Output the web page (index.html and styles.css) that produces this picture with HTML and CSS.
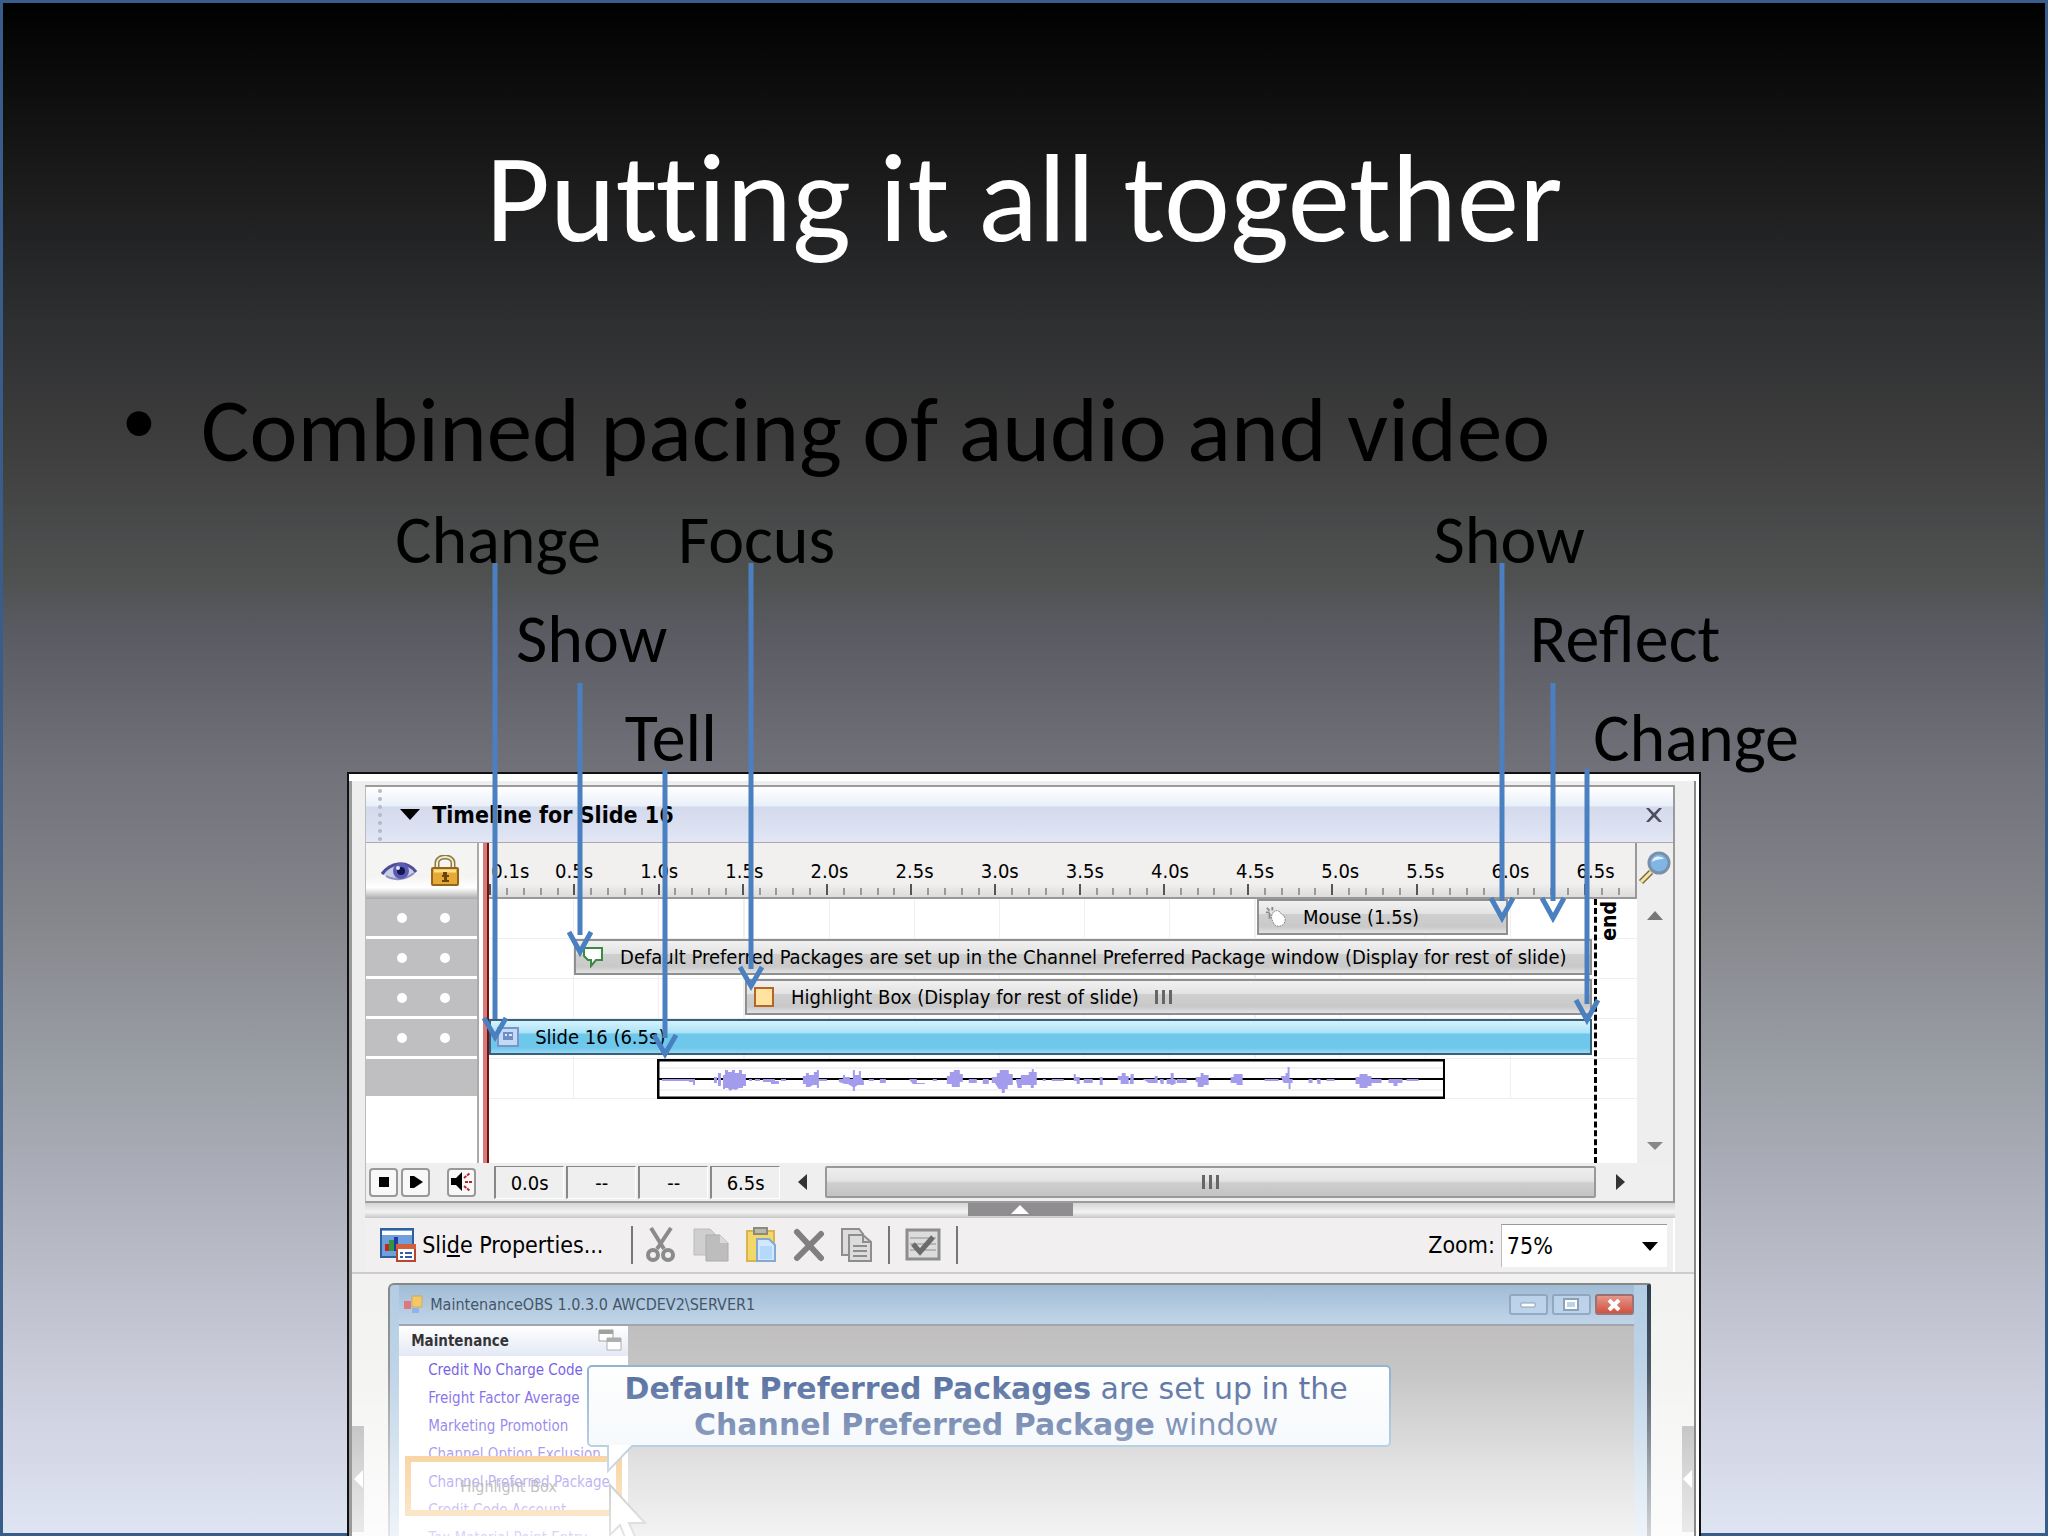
FILE: index.html
```html
<!DOCTYPE html>
<html lang="en">
	<head>
		<meta charset="UTF-8">
		<title>Putting it all together</title>
		<link rel="stylesheet" href="styles.css">
	</head>
	<body>
		<div class="slide">
			<h1>Putting it all together</h1>
			<ul class="points">
				<li>Combined pacing of audio and video</li>
			</ul>
			<div class="steps">
				<span style="left: 19.3%">Change</span>
				<span style="left: 33.1%">Focus</span>
				<span style="left: 70%">Show</span>
			</div>
			<div class="steps">
				<span style="left: 25.2%">Show</span>
				<span style="left: 74.7%">Reflect</span>
			</div>
			<div class="steps">
				<span style="left: 30.5%">Tell</span>
				<span style="left: 77.8%">Change</span>
			</div>

			<div class="app">
				<!-- timeline -->
				<div class="timeline">
					<div class="titlebar">
						<i class="grip"></i>
						<svg width="20" height="12" viewBox="0 0 20 12"><path d="M0 0h20L10 11z"/></svg>
						<b>Timeline for Slide 16</b>
						<button class="close" aria-label="Close">
							<svg width="18" height="16" viewBox="0 0 18 16"><path d="M1 1h3l5 5 5-5h3l-6 7 6 7h-3l-5-5-5 5H1l6-7z" fill="#4d4d5c"/></svg>
						</button>
					</div>
					<div class="board">
						<div class="flags">
							<div class="flag-head">
								<svg width="36" height="22" viewBox="0 0 36 22">
									<path d="M1 14C9 2 25-2 35 12 27 21 12 21 1 14z" fill="#c9cde8"/>
									<path d="M1 14C9 3 25-1 35 12" fill="none" stroke="#4d4f91" stroke-width="3"/>
									<path d="M5 16c8 5 20 4 28-3" fill="none" stroke="#8e8fc0" stroke-width="2"/>
									<circle cx="20" cy="11" r="8" fill="#5a5cb4"/><circle cx="20" cy="11" r="4" fill="#15164f"/><circle cx="17" cy="8" r="2" fill="#dfe2ff"/>
								</svg>
								<svg width="28" height="32" viewBox="0 0 28 32">
									<path d="M6 14V8c0-8 16-8 16 0v6" fill="none" stroke="#8c7a48" stroke-width="5"/>
									<path d="M6 14V8c0-8 16-8 16 0v6" fill="none" stroke="#f3ecc8" stroke-width="2"/>
									<rect x="1" y="13" width="26" height="17" rx="1" fill="#e5aa35" stroke="#94661c" stroke-width="2"/>
									<path d="M3 16h22" stroke="#ffe18a" stroke-width="3"/>
									<path d="M12 17h4v3h2v2h-2v3h2v2h-7v-2h2v-3h-2v-2h1z" fill="#6b4511"/>
								</svg>
							</div>
							<div class="flag"><i></i><i></i></div>
							<div class="flag"><i></i><i></i></div>
							<div class="flag"><i></i><i></i></div>
							<div class="flag"><i></i><i></i></div>
							<div class="flag"></div>
						</div>
						<div class="tracks">
							<div class="ruler">
								<div class="times" id="times"></div>
								<div class="ticks" id="ticks"></div>
							</div>
							<div class="track">
								<div class="bar" style="margin-left: 66.9%; width: 21.9%">
									<svg width="24" height="24" viewBox="0 0 24 24"><path d="M9 7c3-4 8-1 9 2 5 2 5 8 2 11-4 4-10 2-11-2-2-4-3-7 0-11z" fill="#fff" stroke="#777" stroke-dasharray="2 1"/><path d="M2 2l3 3M8 1v4M1 7h4M5 8v6" stroke="#888" stroke-width="2"/></svg>
									<span>Mouse (1.5s)</span>
								</div>
							</div>
							<div class="track">
								<div class="bar" style="margin-left: 7.4%; width: 88.7%">
									<svg width="20" height="22" viewBox="0 0 20 22"><path d="M1 2h18v12h-6l-5 6v-6H5l-4-4z" fill="#fff" stroke="#3a8a42" stroke-width="2"/></svg>
									<span>Default Preferred Packages are set up in the Channel Preferred Package window (Display for rest of slide)</span>
								</div>
							</div>
							<div class="track">
								<div class="bar" style="margin-left: 22.3%; width: 73.8%">
									<svg width="20" height="20" viewBox="0 0 20 20"><path d="M1 1h18v18H1z" fill="#ffe3a0" stroke="#b5652a" stroke-width="2"/></svg>
									<span>Highlight Box (Display for rest of slide)</span>
									<i class="thumb-grip"></i>
								</div>
							</div>
							<div class="track">
								<div class="bar selected" style="margin-left: 0; width: 96.1%">
									<svg width="22" height="20" viewBox="0 0 22 20"><path d="M1 1h20v18H1z" fill="#c3daf7" stroke="#7b94c9" stroke-width="2"/><path d="M6 5h10v8H6z" fill="#6f8fc4"/><path d="M8 7h2v2H8zM12 7h3v2h-3z" fill="#d8e8ff"/></svg>
									<span>Slide 16 (6.5s)</span>
								</div>
							</div>
							<div class="track">
								<svg class="audio" style="margin-left: 14.6%; width: 68.7%" viewBox="0 0 789 40" preserveAspectRatio="none">
									<rect x="1" y="1" width="787" height="38" fill="#fff" stroke="#000" stroke-width="3"/>
									<path d="M3 9h783M3 31h783" stroke="#e6e6e6"/>
									<path d="M2 20h785" stroke="#000" stroke-width="2"/>
									<path fill="#a39bec" d="M5 20h30v2H5zM32 20h6v6h-2v-3h-4zM57 18h3v6h-3zM61 14h3v13h-3zM66 16h3v5l-1 9h-2zM68 11h3v2h4v-2h3v3h4v-3h3v4h4v12h-3v2h-4l-3 2-3-1-3 2-2-3h-3zM92 20h3v2h-3zM98 20h5v2h-5zM106 20h12v2h4v3h-8v-2h-8zM124 20h5v2h-5zM146 17h3v-3h3v2h5v-3h3v-2h2v18h-2v-3h-4l-3 2h-4v-3h-3zM162 20h8v2h-8zM182 20h4v-4h2v2h5v2h3v-9h2v5h4v-4h2v6l3 4v4h-6l-3 2v4h-2v-4l-5-3h-3l-6-2zM212 20h5v2h-5zM223 20h6v4h-6zM252 20h8v4h8v1h-12zM276 20h4v2h-4zM290 17h3v-4h4v-2h6v4h3v8h-3v5h-8v-3h-5zM312 20h8v4h-8zM326 20h6v5h-6zM335 18h5v-4h3v-3h9v4h4v11h-5v4h-3v4h-3v-4h-3l-4-6h-3zM359 20h5v-4h5v10h-4v3h-4zM369 16h3v-3h3v-3h2v3h3v13h-3v3h-3v-3h-5zM386 20h3v2h-3zM395 20h12v2h-12zM417 15h2v3h4v7h-3v-3h-3zM427 20h9v4h-9zM443 18h3v8h-3zM461 17h4v-3h4v3h3v8h-8v-4h-3zM474 15h3v10h-4zM486 20h12v-3h3v7h-9zM503 20h4v5h-3zM514 14h3v12h-3zM510 20h9v5h-9zM520 20h10v4h-10zM539 18h5v-4h3v2h5v10h-5v2h-6v-5h-2zM574 18h3v-3h9v11h-6v-2h-6zM608 20h14v2h-14zM624 17h5v-3h2V8h2v12h3v4h-2v6h-2v-6h-5zM652 20h4v4h-4zM660 20h4v5h-3zM670 20h8v2h-8zM699 18h4v-3h8v2h4v3h10v4h-10v3h-4v2h-8v-4h-4zM732 20h14v4h-5v3h-4v-3h-5zM750 20h12v2h-12z"/>
								</svg>
							</div>
							<div class="end"><b>end</b></div>
						</div>
						<div class="scroll-v">
							<svg width="34" height="34" viewBox="0 0 34 34">
								<path d="M3 31l10-10" stroke="#7d6a35" stroke-width="6"/><path d="M3 31l10-10" stroke="#f3e4ae" stroke-width="3"/>
								<circle cx="21" cy="12" r="10" fill="#7fb6e4" stroke="#7c8fa8" stroke-width="3"/>
								<path d="M14 11c1-6 8-7 12-3-3 0-7 0-12 3z" fill="#dff1ff"/>
							</svg>
							<svg class="up" width="16" height="10" viewBox="0 0 16 10"><path d="M0 9l8-9 8 9z" fill="#777"/></svg>
							<svg class="down" width="16" height="10" viewBox="0 0 16 10"><path d="M0 1h16L8 9z" fill="#888"/></svg>
						</div>
					</div>
					<div class="controls">
						<button aria-label="Stop"><svg width="10" height="10" viewBox="0 0 10 10"><path d="M0 0h10v10H0z"/></svg></button>
						<button aria-label="Play"><svg width="14" height="14" viewBox="0 0 14 14"><path d="M1 1h4l9 6-9 6H1z"/></svg></button>
						<button class="sound" aria-label="Audio"><svg width="22" height="20" viewBox="0 0 22 20"><path d="M0 6h5l6-6v19l-6-6H0z"/><path d="M13 6l6-5M14 10h7M13 14l6 5" stroke="#b23" stroke-width="2" stroke-dasharray="3 1"/></svg></button>
						<span class="cell">0.0s</span>
						<span class="cell">--</span>
						<span class="cell">--</span>
						<span class="cell">6.5s</span>
						<svg class="prev" width="9" height="16" viewBox="0 0 9 16"><path d="M9 0v16L0 8z" fill="#333"/></svg>
						<div class="scroll-h"><i class="thumb-grip"></i></div>
						<svg class="next" width="9" height="16" viewBox="0 0 9 16"><path d="M0 0v16l9-8z" fill="#333"/></svg>
					</div>
				</div>
				<div class="splitter">
					<i><svg width="18" height="9" viewBox="0 0 18 9"><path d="M0 9l9-9 9 9z" fill="#fff"/></svg></i>
				</div>

				<!-- toolbar -->
				<div class="toolbar">
					<button class="props">
						<svg width="36" height="36" viewBox="0 0 36 36">
							<path d="M1 2h32v28H1z" fill="#6f9fdc" stroke="#2f5f9e" stroke-width="2"/><path d="M2 4h30v4H2z" fill="#fff"/>
							<path d="M5 17h4v7H5z" fill="#c22"/><path d="M9 13h5v11H9z" fill="#2a9a3c"/><path d="M14 10h4v14h-4z" fill="#2238a8"/>
							<path d="M17 18h18v16H17z" fill="#fff" stroke="#b5482c" stroke-width="2"/><path d="M16 17h20v5H16z" fill="#d2603c"/>
							<path d="M20 26h3M25 26h7M20 30h3M25 30h7" stroke="#3558a8" stroke-width="2"/>
						</svg>
						<span>Sli<u>d</u>e Properties...</span>
					</button>
					<i class="sep"></i>
					<button aria-label="Cut">
						<svg width="32" height="36" viewBox="0 0 32 36" fill="none" stroke="#8b8b8b"><path d="M6 1l13 21M26 1L12 22" stroke-width="4"/><circle cx="8" cy="28" r="5" stroke-width="4"/><circle cx="23" cy="28" r="5" stroke-width="4"/></svg>
					</button>
					<button aria-label="Copy">
						<svg width="36" height="36" viewBox="0 0 36 36"><path d="M1 2h16l6 6v20H1z" fill="#cfcfcf" stroke="#bcbcbc"/><path d="M13 8h14l8 8v18H13z" fill="#bdbdbd" stroke="#adadad"/><path d="M27 8v8h8z" fill="#dadada"/></svg>
					</button>
					<button aria-label="Paste">
						<svg width="32" height="36" viewBox="0 0 32 36"><path d="M2 4h27v30H2z" fill="#f3d768" stroke="#d9b550" stroke-width="2"/><path d="M9 1h13v6H9z" fill="#b9b9ad" stroke="#8a8a80" stroke-width="2"/><path d="M12 12h12l6 6v16H12z" fill="#d4e8fb" stroke="#83a9d6" stroke-width="2"/><path d="M15 19h12v13H15z" fill="#b5d9fa"/></svg>
					</button>
					<button aria-label="Delete">
						<svg width="32" height="34" viewBox="0 0 32 34"><path d="M4 4l24 26M28 6L4 30" stroke="#808080" stroke-width="6" stroke-linecap="round"/></svg>
					</button>
					<button aria-label="Duplicate">
						<svg width="32" height="36" viewBox="0 0 32 36" fill="#dcdcdc" stroke="#8e8e8e" stroke-width="2"><path d="M1 2h17l4 5v21H1z"/><path d="M8 8h14l8 7v19H8z"/><path d="M22 8v7h8M12 19h14M12 24h14M12 29h14" fill="none"/></svg>
					</button>
					<i class="sep"></i>
					<button class="check" aria-label="Accept">
						<svg width="36" height="34" viewBox="0 0 36 34"><path d="M2 2h32v29H2z" fill="#dcdcdc" stroke="#8e8e8e" stroke-width="3"/><path d="M5 10h26M5 16h26M5 22h26" stroke="#b5b5b5" stroke-width="2"/><path d="M8 16l7 8L28 9" fill="none" stroke="#6c6c6c" stroke-width="5"/></svg>
					</button>
					<i class="sep"></i>
					<label for="zoom">Zoom:</label>
					<span class="select">
						<select id="zoom"><option>75%</option></select>
						<svg width="16" height="9" viewBox="0 0 16 9"><path d="M0 0h16L8 9z"/></svg>
					</span>
				</div>

				<!-- slide preview -->
				<div class="preview">
					<i class="side-tab"><svg width="9" height="18" viewBox="0 0 9 18"><path d="M9 0v18L0 9z" fill="#fff"/></svg></i>
					<div class="window">
						<div class="win-title">
							<svg width="20" height="20" viewBox="0 0 20 20"><path d="M1 6h7v8H1z" fill="#d4606c"/><path d="M9 1h10v11H9z" fill="#f0c04c" stroke="#c99a49"/><path d="M9 13h7v5H9z" fill="#7fa3e4"/></svg>
							<span>MaintenanceOBS 1.0.3.0 AWCDEV2\SERVER1</span>
							<button aria-label="Minimize"><svg width="16" height="8" viewBox="0 0 16 8"><path d="M1 2h14v4H1z" fill="#fff" stroke="#7890ad"/></svg></button>
							<button aria-label="Maximize"><svg width="16" height="14" viewBox="0 0 16 14"><path d="M2 2h12v9H2z" fill="none" stroke="#7890ad" stroke-width="4"/><path d="M3 3h10v7H3z" fill="none" stroke="#fff" stroke-width="2"/></svg></button>
							<button class="win-close" aria-label="Close window"><svg width="16" height="12" viewBox="0 0 16 12"><path d="M3 1l10 10M13 1L3 11" stroke="#fff" stroke-width="4"/></svg></button>
						</div>
						<div class="win-body">
							<div class="menu">
								<div class="menu-head">
									<b>Maintenance</b>
									<svg width="24" height="24" viewBox="0 0 24 24"><path d="M1 1h14v11H1z" fill="#fff" stroke="#8a8a8a"/><path d="M1 3h14" stroke="#8a8a8a" stroke-width="4"/><path d="M9 9h14v12H9z" fill="#fff" stroke="#9a9a9a"/><path d="M9 11h14" stroke="#9a9a9a" stroke-width="4"/></svg>
								</div>
								<a href="#">Credit No Charge Code</a>
								<a href="#">Freight Factor Average</a>
								<a href="#">Marketing Promotion</a>
								<a href="#">Channel Option Exclusion</a>
								<a href="#">Channel Preferred Package</a>
								<a href="#">Credit Code Account</a>
								<a href="#">Tax Material Point Entry</a>
							</div>
							<div class="highlight">Highlight Box</div>
							<div class="callout">
								<b>Default Preferred Packages</b> are set up in the<br><b>Channel Preferred Package</b> window
								<svg width="28" height="30" viewBox="0 0 28 30"><path d="M1 0v26L26 0" fill="#fff" stroke="#7ba3c4" stroke-width="2"/></svg>
							</div>
							<svg class="pointer" width="40" height="64" viewBox="0 0 40 64"><path d="M2 2v50l10-10 8 20 9-4-8-18h16z" fill="#fff" stroke="#777" stroke-width="2"/></svg>
						</div>
					</div>
					<i class="side-tab"><svg width="9" height="18" viewBox="0 0 9 18"><path d="M9 0v18L0 9z" fill="#fff"/></svg></i>
				</div>
			</div>

			<svg class="arrows" viewBox="0 0 2048 1536">
				<path d="M495 563v456M484 1018l11 19 11-19M580 683v252M569 932l11 20 11-20M665 770v268M654 1035l11 19 11-19M751 563v406M740 967l11 19 11-19M1502 563v338M1491 898l11 20 11-20M1553 683v218M1542 898l11 20 11-20M1587 769v235M1576 1000l11 20 11-20"/>
			</svg>
		</div>
		<script>
			var times = document.getElementById("times");
			var ticks = document.getElementById("ticks");
			for (var i = 0; i <= 13; i++) {
				var time = document.createElement("span");
				time.textContent = i == 0 ? "0.1s" : (i / 2).toFixed(1) + "s";
				times.appendChild(time);
			}
			for (var k = 0; k < 68; k++) {
				var tick = document.createElement("i");
				if (k % 5 == 0) {
					tick.className = "major";
				}
				ticks.appendChild(tick);
			}
		</script>
	</body>
</html>
```
FILE: styles.css
```css
* {
	box-sizing: border-box;
}

body {
	margin: 0;
	font-family: "DejaVu Sans Condensed", Tahoma, "Noto Sans", sans-serif;
	font-size: 20px;
	color: #000;
}

svg {
	display: block;
	flex: none;
}

button {
	margin: 0;
	padding: 0;
	border: 0;
	background: none;
	font: inherit;
	color: inherit;
}

.slide {
	position: relative;
	display: flex;
	flex-direction: column;
	height: 100vh;
	overflow: hidden;
	background: linear-gradient(#000, #171718 10%, #2c2d2e 20%, #404041 30%, #505252 38%, #5a5b62 41%, #717279 50%, #86878d 60%, #9b9fa6 70%, #b4b6c2 80%, #cccedc 90%, #dfe5f3);
	box-shadow: inset 0 0 0 3px #385d8a;
}

h1,
.points,
.steps {
	flex: none;
	font-family: Carlito, Calibri, Lato, sans-serif;
	font-weight: normal;
}

h1 {
	margin: 127px 0 0;
	font-size: 125px;
	line-height: 144px;
	font-variant-ligatures: none;
	text-align: center;
	color: #fff;
}

.points {
	margin: 103px 0 4px;
	padding: 0 0 0 201px;
	list-style: none;
	font-size: 91px;
	line-height: 112px;
}

.points li::before {
	content: "•";
	float: left;
	margin-left: -78px;
	font-family: "Liberation Sans", Arial, sans-serif;
	line-height: 98px;
}

.steps {
	position: relative;
	height: 99px;
	font-size: 68px;
	line-height: 99px;
}

.steps span {
	position: absolute;
}

/* screenshot panel */
.app {
	flex: 1;
	z-index: 1;
	display: flex;
	flex-direction: column;
	width: 66.1%;
	margin: -15px auto 0;
	padding: 11px 24px 0 16px;
	border: 2px solid #111;
	border-bottom: 0;
	background: #efeeef;
	box-shadow: inset 0 7px #fff, inset -3px 0 #fff, inset -5px 0 #888, inset 3px 0 #999;
}

.timeline {
	border: 2px solid #9b9b9b;
	border-left: 1px solid #bbb;
	background: #f0efef;
}

.titlebar {
	display: flex;
	align-items: center;
	height: 56px;
	padding: 0 10px 0 12px;
	border-bottom: 1px solid #aaa;
	background: linear-gradient(#fff, #e9eff9 35%, #d3daec 36%, #e2e6f5);
	font-size: 23px;
}

.grip {
	height: 52px;
	margin-right: 18px;
	border-left: 4px dotted #b4b9c6;
}

.titlebar b {
	margin-left: 12px;
}

.close {
	margin-left: auto;
}

.board {
	display: grid;
	grid-template-columns: 113px 1fr 36px;
	height: 320px;
	background: #fff;
}

.flags {
	border-right: 2px solid #aaa;
}

.flag-head {
	display: flex;
	justify-content: center;
	align-items: center;
	gap: 14px;
	height: 56px;
	padding-right: 4px;
	background: linear-gradient(#f4f4f3 60%, #fff 80%, #aaa);
}

.flag {
	display: flex;
	justify-content: center;
	align-items: center;
	gap: 33px;
	height: 40px;
	padding-left: 4px;
	border-bottom: 3px solid #fff;
	background: #bfbfc1;
}

.flag i {
	width: 10px;
	height: 10px;
	border-radius: 50%;
	background: #fff;
}

.tracks {
	position: relative;
	margin-left: 4px;
	border-left: 4px solid #d97a78;
	box-shadow: inset 2px 0 #6a1414;
}

.ruler {
	height: 56px;
	margin-left: 2px;
	padding-top: 14px;
	border-right: 2px solid #999;
	border-bottom: 2px solid #999;
	background: linear-gradient(#f1f0ef 75%, #dcdcdc);
}

.times {
	display: grid;
	grid-template-columns: 3.7% repeat(13, 7.43%);
	height: 26px;
	line-height: 28px;
	text-align: center;
}

.ticks {
	display: flex;
	align-items: flex-end;
	height: 12px;
}

.ticks i {
	flex: 1;
	height: 7px;
	border-left: 2px solid #999;
}

.ticks .major {
	height: 11px;
	border-color: #555;
}

.track {
	height: 40px;
	margin-left: 2px;
	border-bottom: 1px solid #eee;
	background: repeating-linear-gradient(to right, transparent 0 7.32%, #f0f0f0 7.32% 7.42%);
}

.bar {
	display: flex;
	align-items: center;
	height: 36px;
	padding-left: 6px;
	border: 2px solid #8f8f8f;
	background: linear-gradient(#f1f1f1, #e3e3e3 40%, #cfcfcf 42%, #c9c9c9 80%, #e2e2e2);
	white-space: nowrap;
}

.bar svg {
	width: 22px;
}

.bar span {
	margin-left: 16px;
}

.bar.selected {
	border-color: #37607f;
	background: linear-gradient(#d8f2fc, #a8e2f7 38%, #6ec8ec 40%, #6ec8ec 84%, #9cd6ef);
}

.thumb-grip {
	width: 18px;
	height: 14px;
	margin-left: 16px;
	background: repeating-linear-gradient(to right, #666 0 3px, transparent 3px 7px);
}

.audio {
	height: 40px;
}

.end {
	position: absolute;
	top: 56px;
	bottom: 0;
	left: 96.3%;
	padding-top: 2px;
	border-left: 3px dashed #000;
	font-size: 21px;
	line-height: 24px;
}

.end b {
	display: block;
	writing-mode: vertical-rl;
	transform: rotate(180deg);
}

.scroll-v {
	display: flex;
	flex-direction: column;
	align-items: center;
	padding: 8px 0 12px;
	background: #efeeef;
}

.up {
	margin-top: 26px;
}

.down {
	margin-top: auto;
}

.controls {
	display: flex;
	align-items: center;
	height: 38px;
	padding-left: 3px;
}

.controls button {
	display: flex;
	justify-content: center;
	align-items: center;
	width: 29px;
	height: 29px;
	margin-right: 3px;
	border: 2px solid #999;
	border-radius: 4px;
	background: #f8f8f8;
}

.controls .sound {
	margin: 0 18px 0 14px;
}

.cell {
	width: 70px;
	height: 33px;
	margin-right: 2px;
	border: 1px solid #fff;
	border-top-color: #888;
	border-left: 2px solid #888;
	line-height: 32px;
	text-align: center;
}

.prev {
	margin: 0 18px 0 16px;
}

.scroll-h {
	display: flex;
	flex: 1;
	justify-content: center;
	align-items: center;
	height: 32px;
	border: 2px solid #999;
	border-radius: 2px;
	background: linear-gradient(#eee, #e4e4e4 45%, #cfcdcf 55%, #c4c3c4);
}

.scroll-h .thumb-grip {
	margin: 0;
}

.next {
	margin: 0 48px 0 20px;
}

.splitter {
	display: flex;
	justify-content: center;
	height: 15px;
	background: linear-gradient(#d5d4d5, #f3f3f3 60%, #c8c7c8);
}

.splitter i {
	display: flex;
	justify-content: center;
	align-items: center;
	width: 105px;
	height: 13px;
	background: #8f8d8f;
}

.toolbar {
	display: flex;
	align-items: center;
	height: 54px;
	padding: 0 6px 0 15px;
	border-right: 2px solid #fff;
	background: #f1eff0;
	font-size: 23px;
}

.toolbar button + button {
	margin-left: 16px;
}

.props {
	display: flex;
	align-items: center;
	gap: 6px;
}

.sep {
	width: 2px;
	height: 38px;
	margin: 0 15px;
	background: #777;
}

.props + .sep {
	margin: 0 12px 0 28px;
}

.toolbar label {
	margin-left: auto;
}

.select {
	position: relative;
	margin-left: 6px;
}

.select select {
	display: block;
	width: 166px;
	height: 43px;
	padding: 0 5px;
	border: 0;
	border-top: 1px solid #999;
	border-left: 1px solid #bbb;
	border-radius: 0;
	background: #fff;
	appearance: none;
	font: inherit;
	color: #000;
}

.select svg {
	position: absolute;
	top: 18px;
	right: 9px;
}

.preview {
	position: relative;
	display: flex;
	flex: 1;
	margin: 0 -19px 0 -13px;
	padding-top: 9px;
	border-top: 2px solid #ccc;
	background: #f0f0ef;
	overflow: hidden;
}

/* reflection fade towards the bottom of the slide */
.preview::after {
	content: "";
	position: absolute;
	inset: 0;
	background: linear-gradient(rgba(255, 255, 255, .1), rgba(255, 255, 255, .25) 35%, rgba(255, 255, 255, .6) 70%, rgba(255, 255, 255, .85));
	pointer-events: none;
}

.side-tab {
	display: flex;
	flex: none;
	justify-content: center;
	align-items: center;
	width: 12px;
	height: 106px;
	margin-top: 143px;
	background: #999;
}

.window {
	position: relative;
	flex: 1;
	margin: 0 31px 0 24px;
	padding: 0 13px 0 9px;
	border: 2px solid #777;
	border-right: 4px solid #123;
	border-bottom: 0;
	border-radius: 6px 3px 0 0;
	background: #a9c6e0;
}

.win-title {
	display: flex;
	align-items: center;
	gap: 4px;
	height: 39px;
	padding-left: 4px;
	background: linear-gradient(#93b3cf, #b3cce4);
	font-size: 16px;
	color: #24384d;
}

.win-title span {
	margin: 0 auto 0 3px;
}

.win-title button {
	display: flex;
	justify-content: center;
	align-items: center;
	width: 39px;
	height: 21px;
	border: 2px solid #7e99b8;
	border-radius: 3px;
	background: #b0cbe6;
}

.win-title .win-close {
	border-color: #8d5a5a;
	background: linear-gradient(#e08878, #c9301c);
}

.win-body {
	height: 100%;
	background: linear-gradient(#b2b0b1, #b5b5b5 40%, #c4c4c6 100%);
	border-top: 2px solid #8d9299;
}

.menu {
	width: 229px;
	height: 100%;
	background: #fff;
	font-size: 15px;
}

.menu-head {
	display: flex;
	justify-content: space-between;
	align-items: center;
	height: 30px;
	padding: 0 6px 0 12px;
	background: linear-gradient(#fff, #dbe2f2);
}

.menu a {
	display: block;
	padding-left: 29px;
	line-height: 28px;
	color: #4a2ee0;
	text-decoration: none;
	white-space: nowrap;
}

.highlight {
	position: absolute;
	top: 171px;
	left: 15px;
	width: 217px;
	height: 60px;
	padding-right: 10px;
	border: 6px solid #f0a030;
	line-height: 50px;
	text-align: center;
	font-size: 16px;
	color: #444;
}

.callout {
	position: absolute;
	top: 80px;
	left: 197px;
	width: 804px;
	height: 82px;
	padding: 4px 6px 0 0;
	border: 2px solid #6f9cc3;
	border-radius: 5px;
	background: linear-gradient(#fff, #eef4fa);
	font-family: "DejaVu Sans", Verdana, sans-serif;
	font-size: 30px;
	line-height: 36px;
	text-align: center;
	color: #1c3f80;
}

.callout svg {
	position: absolute;
	top: 78px;
	left: 18px;
}

.pointer {
	position: absolute;
	top: 198px;
	left: 218px;
}

/* arrows over the panel */
.arrows {
	position: absolute;
	top: 0;
	left: 0;
	z-index: 2;
	width: 100%;
	fill: none;
	stroke: #4a80bf;
	stroke-width: 5;
	pointer-events: none;
}
```
